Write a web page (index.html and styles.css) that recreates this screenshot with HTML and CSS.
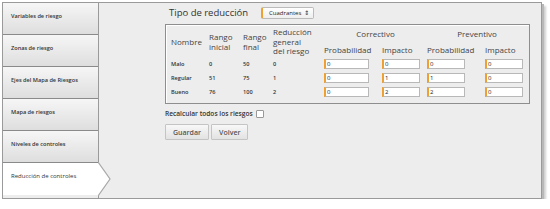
FILE: index.html
```html
<!DOCTYPE html>
<html lang="es">
<head>
    <meta charset="UTF-8">
    <title>Reducción de controles</title>
    <link rel="stylesheet" href="styles.css">
</head>
<body>
    <div class="frame">
        <ul class="tabs">
            <li class="tab">Variables de riesgo</li>
            <li class="tab">Zonas de riesgo</li>
            <li class="tab">Ejes del Mapa de Riesgos</li>
            <li class="tab">Mapa de riesgos</li>
            <li class="tab">Niveles de controles</li>
            <li class="tab active">
                Reducción de controles
                <svg class="tab-arrow" width="14" height="34" viewBox="0 0 14 34">
                    <polygon points="0,0 12,17 0,34" fill="#fff"/>
                    <polyline points="0,0 12,17 0,34" fill="none" stroke="#a8a8a8" stroke-width="1.2"/>
                </svg>
            </li>
        </ul>

        <div class="content">
            <div class="type-row">
                <span class="type-label">Tipo de reducción</span>
                <span class="select">Cuadrantes <span class="arrows">&#8661;</span></span>
            </div>

            <div class="box">
                <table class="grid">
                    <thead>
                        <tr>
                            <th rowspan="2" class="c-name">Nombre</th>
                            <th rowspan="2" class="c-ini">Rango<br>inicial</th>
                            <th rowspan="2" class="c-fin">Rango<br>final</th>
                            <th rowspan="2" class="c-red">Reducción<br>general<br>del riesgo</th>
                            <th colspan="2" class="group">Correctivo</th>
                            <th colspan="2" class="group">Preventivo</th>
                        </tr>
                        <tr class="sub">
                            <th class="c-p1">Probabilidad</th>
                            <th class="c-i1">Impacto</th>
                            <th class="c-p2">Probabilidad</th>
                            <th class="c-i2">Impacto</th>
                        </tr>
                    </thead>
                    <tbody>
                        <tr>
                            <td>Malo</td><td>0</td><td>50</td><td>0</td>
                            <td><input class="field wide" value="0"></td>
                            <td><input class="field" value="0"></td>
                            <td><input class="field" value="0"></td>
                            <td><input class="field" value="0"></td>
                        </tr>
                        <tr>
                            <td>Regular</td><td>51</td><td>75</td><td>1</td>
                            <td><input class="field wide" value="0"></td>
                            <td><input class="field" value="1"></td>
                            <td><input class="field" value="1"></td>
                            <td><input class="field" value="0"></td>
                        </tr>
                        <tr>
                            <td>Bueno</td><td>76</td><td>100</td><td>2</td>
                            <td><input class="field wide" value="0"></td>
                            <td><input class="field" value="2"></td>
                            <td><input class="field" value="2"></td>
                            <td><input class="field" value="0"></td>
                        </tr>
                    </tbody>
                </table>
            </div>

            <div class="recalc">
                Recalcular todos los riesgos <span class="check"></span>
            </div>

            <div class="actions">
                <button class="btn">Guardar</button>
                <button class="btn">Volver</button>
            </div>
        </div>
    </div>
</body>
</html>
```

FILE: styles.css
```css
body {
    margin: 0;
    background: #fff;
    font-family: "Open Sans", "DejaVu Sans", sans-serif;
    color: #333;
}

.frame {
    display: flex;
    margin: 2px 0 0 2px;
    width: 538px;
    height: 195px;
    border: 1px solid #9a9a9a;
    background: #ededed;
    box-shadow: 2px 2px 0 #b8b8b8, 4px 4px 2px #d0d0d0;
}

.tabs {
    list-style: none;
    margin: 0;
    padding: 0;
    width: 95px;
    flex: none;
    border-right: 1px solid #9a9a9a;
}

.tab {
    position: relative;
    height: 32px;
    padding-left: 8px;
    display: flex;
    align-items: center;
    padding-bottom: 6px;
    box-sizing: border-box;
    font-size: 5.6px;
    font-weight: 600;
    color: #333;
    background: linear-gradient(#f6f6f6, #dedede);
    border-bottom: 1px solid #8a8a8a;
}

.tab:last-child {
    border-bottom: none;
}

.tab.active {
    background: #fff;
    font-weight: 400;
    font-size: 6px;
    height: 32px;
    margin-right: -1px;
}

.tab-arrow {
    position: absolute;
    right: -13px;
    top: -1px;
}

.content {
    flex: 1;
    padding: 3px 0 0 66px;
}

.type-row {
    display: flex;
    align-items: center;
    height: 13px;
    padding-left: 4px;
}

.type-label {
    font-size: 9.5px;
    width: 92px;
}

.select {
    display: inline-flex;
    align-items: center;
    height: 10px;
    padding: 0 4px 0 6px;
    font-size: 6px;
    color: #222;
    background: linear-gradient(#fff, #eee);
    border: 1px solid #bbb;
    border-left: 2px solid #f0a030;
    border-radius: 2px;
}

.arrows {
    font-size: 6px;
    margin-left: 3px;
}

.box {
    margin-top: 5px;
    width: 363px;
    height: 78px;
    border: 1px solid #8e8e8e;
    box-shadow: inset 1px 1px 0 #fff;
}

.grid {
    border-collapse: collapse;
    margin-top: 1px;
}

.grid th {
    font-weight: 400;
    font-size: 8px;
    line-height: 9.5px;
    color: #444;
    text-align: left;
    padding: 0;
    vertical-align: middle;
}

.grid th.group {
    text-align: center;
    height: 16px;
    vertical-align: middle;
}

.grid .sub th {
    height: 15px;
}

.c-name { width: 38px; padding-left: 5px !important; }
.c-ini { width: 34px; }
.c-fin { width: 30px; }
.c-red { width: 51px; }
.c-p1 { width: 58px; }
.c-i1 { width: 45px; }
.c-p2 { width: 58px; }
.c-i2 { width: 42px; }

.grid td {
    font-size: 5.6px;
    font-weight: 600;
    color: #333;
    height: 14px;
    padding: 0;
}

.grid td:first-child {
    padding-left: 5px;
}

.field {
    display: block;
    box-sizing: border-box;
    width: 38px;
    height: 10px;
    padding: 0 0 0 1px;
    font-family: "Open Sans", sans-serif;
    font-size: 6px;
    color: #222;
    background: #fff;
    border: 1px solid #b8b8b8;
    border-left: 2px solid #f0a030;
}

.field.wide {
    width: 45px;
}

.recalc {
    display: flex;
    align-items: center;
    margin-top: 5px;
    font-size: 6.6px;
    font-weight: 600;
    color: #333;
}

.check {
    display: inline-block;
    width: 6px;
    height: 6px;
    margin-left: 3px;
    border: 1px solid #999;
    border-radius: 1px;
    background: #fff;
}

.actions {
    display: flex;
    gap: 2px;
    margin-top: 6px;
}

.btn {
    height: 16px;
    padding: 0 7px;
    font-family: "Open Sans", sans-serif;
    font-size: 7px;
    font-weight: 600;
    color: #555;
    background: linear-gradient(#f8f8f8, #e2e2e2);
    border: 1px solid #c4c4c4;
    border-radius: 1px;
}
```
